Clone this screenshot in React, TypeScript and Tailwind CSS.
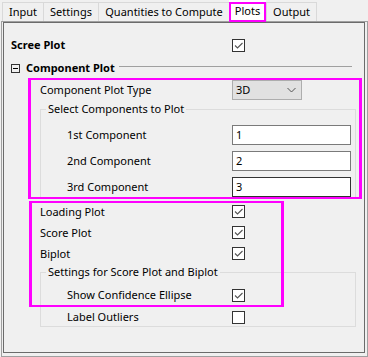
import React from 'react';

const font = { fontFamily: '"Noto Sans", "Open Sans", sans-serif' };

function Check({ checked = true }: { checked?: boolean }) {
  return (
    <span className="flex h-[13px] w-[13px] shrink-0 items-center justify-center border border-[#333333] bg-white">
      {checked && (
        <svg width="11" height="11" viewBox="0 0 11 11">
          <polyline points="2,5.5 4.5,8 9.5,3" fill="none" stroke="#555555" strokeWidth="1.1" />
        </svg>
      )}
    </span>
  );
}

function Tab({ label, w, last }: { label: string; w: string; last?: boolean }) {
  return (
    <div className={`flex h-[19px] items-center justify-center border-l border-t border-[#d9d9d9] bg-[#f0f0f0] ${w} ${last ? 'border-r' : ''}`}>
      {label}
    </div>
  );
}

function CheckRow({ label, pad, labelW, h, checked = true, bold }: { label: string; pad: string; labelW: string; h: string; checked?: boolean; bold?: boolean }) {
  return (
    <div className={`flex items-center ${pad} ${h}`}>
      <span className={`${labelW} ${bold ? 'font-bold' : ''}`}>{label}</span>
      <Check checked={checked} />
    </div>
  );
}

function InputRow({ label, value, dark }: { label: string; value: string; dark?: boolean }) {
  return (
    <div className="flex h-[20px] items-center pl-[26px]">
      <span className="w-[165px]">{label}</span>
      <div className={`flex h-[20px] w-[119px] items-center border bg-white px-[3px] ${dark ? 'border-[#333333]' : 'border-[#7a7a7a]'}`}>
        {value}
      </div>
    </div>
  );
}

export default function App() {
  return (
    <div className="relative h-[357px] w-[368px] overflow-hidden bg-[#f0f0f0] text-[11px] leading-[14px] text-black" style={font}>
      {/* tab strip */}
      <div className="flex h-[21px] items-end pl-[2px]">
        <Tab label="Input" w="w-[41px]" />
        <Tab label="Settings" w="w-[55px]" />
        <Tab label="Quantities to Compute" w="w-[131px]" />
        <div className="flex h-[21px] w-[37px] items-center justify-center bg-white">Plots</div>
        <Tab label="Output" w="w-[51px]" last />
      </div>

      {/* panel */}
      <div className="ml-[1px] flex h-[336px] w-[367px] border border-t border-[#a0a0a0] pb-[3px] pl-[1px] pr-[2px]">
        <div className="flex w-[362px] flex-col border border-[#6b6b6b]">
          <div className="mt-[12px]">
            <CheckRow label="Scree Plot" pad="pl-[7px]" labelW="w-[221px]" h="h-[20px]" bold />
          </div>

          <div className="mt-[3px] flex h-[20px] items-center pl-[7px] pr-[12px]">
            <span className="flex h-[9px] w-[9px] items-center justify-center border border-[#333333]">
              <span className="h-px w-[5px] bg-black" />
            </span>
            <span className="ml-[6px] font-bold">Component Plot</span>
            <span className="mb-[3px] ml-[4px] h-px flex-1 bg-[#a0a0a0]" />
          </div>

          <div className="mt-[2px] flex h-[20px] items-center pl-[36px]">
            <span className="w-[192px]">Component Plot Type</span>
            <div className="flex h-[20px] w-[70px] items-center justify-between border border-[#adadad] bg-[#e1e1e1] pl-[3px] pr-[5px]">
              <span>3D</span>
              <svg width="9" height="6" viewBox="0 0 9 6">
                <polyline points="0.5,1 4.5,5 8.5,1" fill="none" stroke="#555555" strokeWidth="1" />
              </svg>
            </div>
          </div>

          <fieldset className="ml-[36px] mt-[2px] w-[316px] border border-[#dcdcdc] pb-[1px]">
            <legend className="ml-[5px] px-[2px] leading-[14px]">Select Components to Plot</legend>
            <div className="flex flex-col gap-[6px] pt-[9px]">
              <InputRow label="1st Component" value="1" />
              <InputRow label="2nd Component" value="2" />
              <InputRow label="3rd Component" value="3" dark />
            </div>
          </fieldset>

          <div className="mt-[2px] flex flex-col">
            <CheckRow label="Loading Plot" pad="pl-[36px]" labelW="w-[192px]" h="h-[21px]" />
            <CheckRow label="Score Plot" pad="pl-[36px]" labelW="w-[192px]" h="h-[21px]" />
            <CheckRow label="Biplot" pad="pl-[36px]" labelW="w-[192px]" h="h-[21px]" />
          </div>

          <fieldset className="ml-[36px] mt-[1px] w-[316px] border border-[#dcdcdc]">
            <legend className="ml-[5px] px-[2px] leading-[14px]">Settings for Score Plot and Biplot</legend>
            <div className="flex flex-col gap-[4px] pt-[7px]">
              <CheckRow label="Show Confidence Ellipse" pad="pl-[26px]" labelW="w-[165px]" h="h-[18px]" />
              <CheckRow label="Label Outliers" pad="pl-[26px]" labelW="w-[165px]" h="h-[18px]" checked={false} />
            </div>
          </fieldset>
        </div>
      </div>

      {/* magenta highlight annotations */}
      <div className="pointer-events-none absolute left-[229px] top-[2px] h-[20px] w-[37px] border-2 border-[#ff00ff]" />
      <div className="pointer-events-none absolute left-[28px] top-[78px] h-[121px] w-[334px] border-x-[3px] border-y-2 border-[#ff00ff]" />
      <div className="pointer-events-none absolute left-[29px] top-[201px] h-[106px] w-[255px] border-x-[3px] border-y-2 border-[#ff00ff]" />
    </div>
  );
}
